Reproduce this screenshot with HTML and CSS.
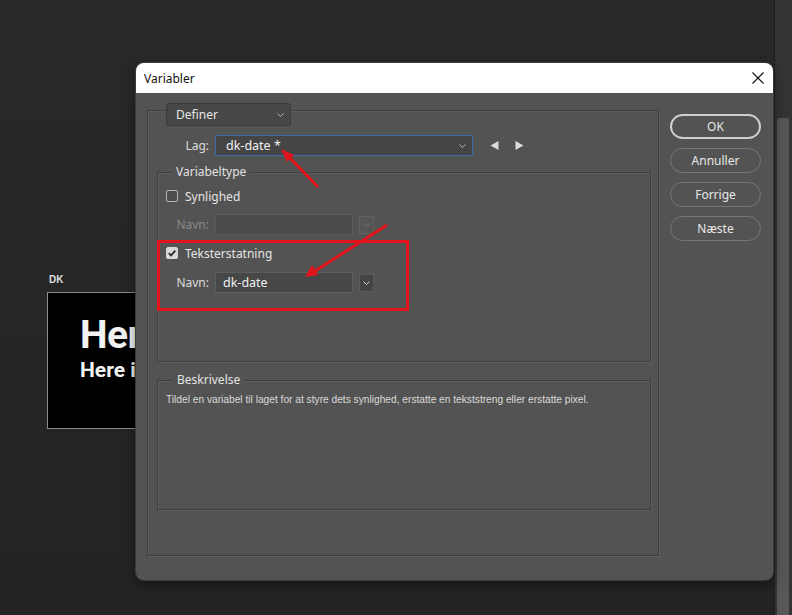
FILE: index.html
```html
<!DOCTYPE html>
<html>
<head>
<meta charset="utf-8">
<title>Variabler</title>
<link rel="stylesheet" href="styles.css">
</head>
<body>
<div class="desktop">
  <div class="doc">
    <div class="doc-label">DK</div>
    <div class="artboard">
      <div class="art-big">Here</div>
      <div class="art-small">Here is</div>
    </div>
  </div>

  <div class="scrollbar"><div class="thumb"></div></div>

  <div class="dialog">
    <div class="titlebar">
      <span class="title">Variabler</span>
      <svg class="close" width="12" height="12" viewBox="0 0 12 12"><path d="M0.5 0.5 L11.5 11.5 M11.5 0.5 L0.5 11.5" stroke="#111" stroke-width="1.1" fill="none"/></svg>
    </div>
    <div class="dialog-body">
      <div class="main-group">
        <div class="select definer">
          <span>Definer</span>
          <svg class="chev" width="7" height="4" viewBox="0 0 7 4"><path d="M0.5 0.5 L3.5 3.5 L6.5 0.5" stroke="#b5b5b5" fill="none"/></svg>
        </div>
        <div class="row lag-row">
          <label class="lbl lbl-lag">Lag:</label>
          <div class="select lag">
            <span>dk-date *</span>
            <svg class="chev" width="7" height="4" viewBox="0 0 7 4"><path d="M0.5 0.5 L3.5 3.5 L6.5 0.5" stroke="#b5b5b5" fill="none"/></svg>
          </div>
          <div class="nav-arrows">
            <svg width="9" height="9" viewBox="0 0 9 9"><path d="M8.5 0 L8.5 9 L0.5 4.5 Z" fill="#dcdcdc"/></svg>
            <svg width="9" height="9" viewBox="0 0 9 9"><path d="M0.5 0 L0.5 9 L8.5 4.5 Z" fill="#dcdcdc"/></svg>
          </div>
        </div>

        <div class="group vartype">
          <div class="legend">Variabeltype</div>
          <div class="check-row first">
            <span class="checkbox"></span>
            <span class="check-label">Synlighed</span>
          </div>
          <div class="row navn-row disabled">
            <label class="lbl">Navn:</label>
            <div class="field"></div>
            <div class="drop-btn"><svg width="7" height="4" viewBox="0 0 7 4"><path d="M0.5 0.5 L3.5 3.5 L6.5 0.5" stroke="#777" fill="none"/></svg></div>
          </div>
          <div class="check-row second">
            <span class="checkbox checked"><svg width="10" height="10" viewBox="0 0 10 10"><path d="M1.8 5.2 L4 7.4 L8.3 2.6" stroke="#2a2a2a" stroke-width="1.8" fill="none"/></svg></span>
            <span class="check-label">Teksterstatning</span>
          </div>
          <div class="row navn-row active">
            <label class="lbl">Navn:</label>
            <div class="field">dk-date</div>
            <div class="drop-btn"><svg width="7" height="4" viewBox="0 0 7 4"><path d="M0.5 0.5 L3.5 3.5 L6.5 0.5" stroke="#d5d5d5" fill="none"/></svg></div>
          </div>
        </div>

        <div class="group desc">
          <div class="legend">Beskrivelse</div>
          <p class="desc-text">Tildel en variabel til laget for at styre dets synlighed, erstatte en tekststreng eller erstatte pixel.</p>
        </div>
      </div>

      <div class="buttons">
        <div class="btn default">OK</div>
        <div class="btn">Annuller</div>
        <div class="btn">Forrige</div>
        <div class="btn">Næste</div>
      </div>
    </div>
  </div>

  <svg class="annot" width="792" height="615" viewBox="0 0 792 615">
    <rect x="158.5" y="241.5" width="249" height="68" fill="none" stroke="#e3131b" stroke-width="3"/>
    <line x1="318" y1="187" x2="289" y2="157" stroke="#e3131b" stroke-width="3"/>
    <path d="M281 149 L294 155 L287 162 Z" fill="#e3131b"/>
    <line x1="387" y1="225" x2="315" y2="271" stroke="#e3131b" stroke-width="3"/>
    <path d="M305 277 L312 265 L318 275 Z" fill="#e3131b"/>
  </svg>
</div>
</body>
</html>
```

FILE: styles.css
```css
* { box-sizing: border-box; }

html, body {
  margin: 0;
  padding: 0;
  width: 792px;
  height: 615px;
  overflow: hidden;
  background: #272727;
  font-family: "Noto Sans", "Open Sans", sans-serif;
}

.desktop {
  position: relative;
  width: 792px;
  height: 615px;
  background: linear-gradient(#292929, #232323);
}

/* document on canvas */
.doc {
  position: absolute;
  left: 47px;
  top: 273px;
}
.doc-label {
  color: #dedede;
  font-family: "Liberation Sans", sans-serif;
  font-weight: bold;
  font-size: 10px;
  line-height: 13px;
  padding-left: 2px;
  margin-bottom: 6px;
}
.artboard {
  width: 89px;
  height: 137px;
  background: #000;
  border: 1px solid #8c8c8c;
  border-right: 0;
  overflow: hidden;
  padding: 20px 0 0 32px;
  white-space: nowrap;
  font-family: Roboto, "Liberation Sans", sans-serif;
  font-weight: bold;
  color: #f2f2f2;
}
.art-big {
  font-size: 39px;
  line-height: 44px;
  letter-spacing: -0.5px;
}
.art-small {
  font-size: 21px;
  line-height: 26px;
}

/* right scrollbar */
.scrollbar {
  position: absolute;
  right: 0;
  top: 0;
  width: 18px;
  height: 615px;
  background: #343434;
  border-left: 1px solid #1e1e1e;
  padding: 118px 3px 0 2px;
}
.thumb {
  height: 100%;
  background: #575757;
  border-radius: 2px 2px 0 0;
}

/* dialog window */
.dialog {
  position: absolute;
  left: 136px;
  top: 63px;
  width: 637px;
  height: 517px;
  background: #535353;
  border-radius: 8px;
  overflow: hidden;
  box-shadow: 0 0 0 1px #3a3a3a, 0 4px 14px rgba(0,0,0,0.45);
}
.titlebar {
  height: 30px;
  background: #fff;
  display: flex;
  align-items: center;
  justify-content: space-between;
  padding: 0 9px 0 8px;
}
.title {
  font-size: 12px;
  color: #111;
}
.close { display: block; }

.dialog-body {
  display: flex;
  gap: 11px;
  padding: 17px 12px 0 11px;
}

.main-group {
  width: 512px;
  height: 446px;
  border: 1px solid #3f3f3f;
  box-shadow: inset 1px 1px 0 #5e5e5e, 1px 1px 0 #5e5e5e;
  display: flex;
  flex-direction: column;
  align-items: flex-start;
}

.select {
  display: flex;
  align-items: center;
  justify-content: space-between;
  color: #e6e6e6;
  font-size: 12px;
  border-radius: 3px;
}
.definer {
  margin: -8px 0 0 18px;
  width: 125px;
  height: 23px;
  background: #474747;
  border: 1px solid #3b3b3b;
  padding: 0 6px 0 9px;
}

.row {
  display: flex;
  align-items: center;
}
.lbl {
  text-align: right;
  font-size: 12px;
  color: #dcdcdc;
  margin-right: 6px;
}
.lag-row {
  margin-top: 9px;
}
.lbl-lag { width: 61px; }
.lag {
  width: 258px;
  height: 21px;
  background: #454545;
  border: 1px solid #3d6aa8;
  border-radius: 1px;
  padding: 0 6px 0 10px;
  font-size: 12.5px;
  color: #f0f0f0;
}
.nav-arrows {
  display: flex;
  gap: 16px;
  margin-left: 17px;
}
.nav-arrows svg { display: block; }

/* group boxes */
.group {
  align-self: stretch;
  margin-left: 9px;
  margin-right: 7px;
  border: 1px solid #3f3f3f;
  box-shadow: inset 1px 1px 0 #5e5e5e, 1px 1px 0 #5e5e5e;
}
.legend {
  width: fit-content;
  background: #535353;
  color: #e2e2e2;
  font-size: 12px;
  line-height: 16px;
  padding: 0 4px;
  margin: -9px 0 0 14px;
}
.vartype {
  margin-top: 16px;
  height: 190px;
}
.desc {
  margin-top: 18px;
  height: 130px;
}
.desc .legend { margin-left: 15px; }

.check-row {
  display: flex;
  align-items: center;
  height: 16px;
  padding-left: 8px;
}
.check-row.first { margin-top: 8px; }
.check-row.second { margin-top: 10px; }
.checkbox {
  width: 12px;
  height: 12px;
  border: 1px solid #b8b8b8;
  border-radius: 2px;
  background: #4c4c4c;
  display: flex;
  align-items: center;
  justify-content: center;
}
.checkbox.checked {
  background: #d9d9d9;
  border-color: #d9d9d9;
}
.check-label {
  margin-left: 7px;
  font-size: 12px;
  color: #e4e4e4;
}

.navn-row { margin-top: 10px; }
.navn-row.active { margin-top: 11px; }
.navn-row .lbl { width: 51px; }
.disabled .lbl { color: #8a8a8a; }
.field {
  width: 138px;
  height: 21px;
  border: 1px solid #5e5e5e;
  background: #474747;
  font-size: 12.5px;
  color: #f0f0f0;
  padding-left: 7px;
  line-height: 19px;
}
.disabled .field {
  background: #4a4a4a;
  border-color: #5b5b5b;
}
.drop-btn {
  width: 15px;
  height: 18px;
  margin-left: 6px;
  border: 1px solid #5e5e5e;
  background: #474747;
  display: flex;
  align-items: center;
  justify-content: center;
}
.disabled .drop-btn {
  background: #555;
  border-color: #606060;
}
.active .drop-btn {
  background: #444;
  border-color: #5a5a5a;
}

.desc-text {
  margin: 6px 0 0 0;
  padding-left: 8px;
  font-family: "Liberation Sans", sans-serif;
  font-size: 10.2px;
  line-height: 12px;
  color: #dadada;
}

/* buttons */
.buttons {
  display: flex;
  flex-direction: column;
  gap: 9px;
  padding-top: 4px;
}
.btn {
  width: 91px;
  height: 25px;
  border-radius: 13px;
  border: 1px solid #767676;
  color: #e8e8e8;
  font-size: 12px;
  display: flex;
  align-items: center;
  justify-content: center;
}
.btn.default {
  border: 2px solid #cfcfcf;
}

.annot {
  position: absolute;
  left: 0;
  top: 0;
  pointer-events: none;
}
```
